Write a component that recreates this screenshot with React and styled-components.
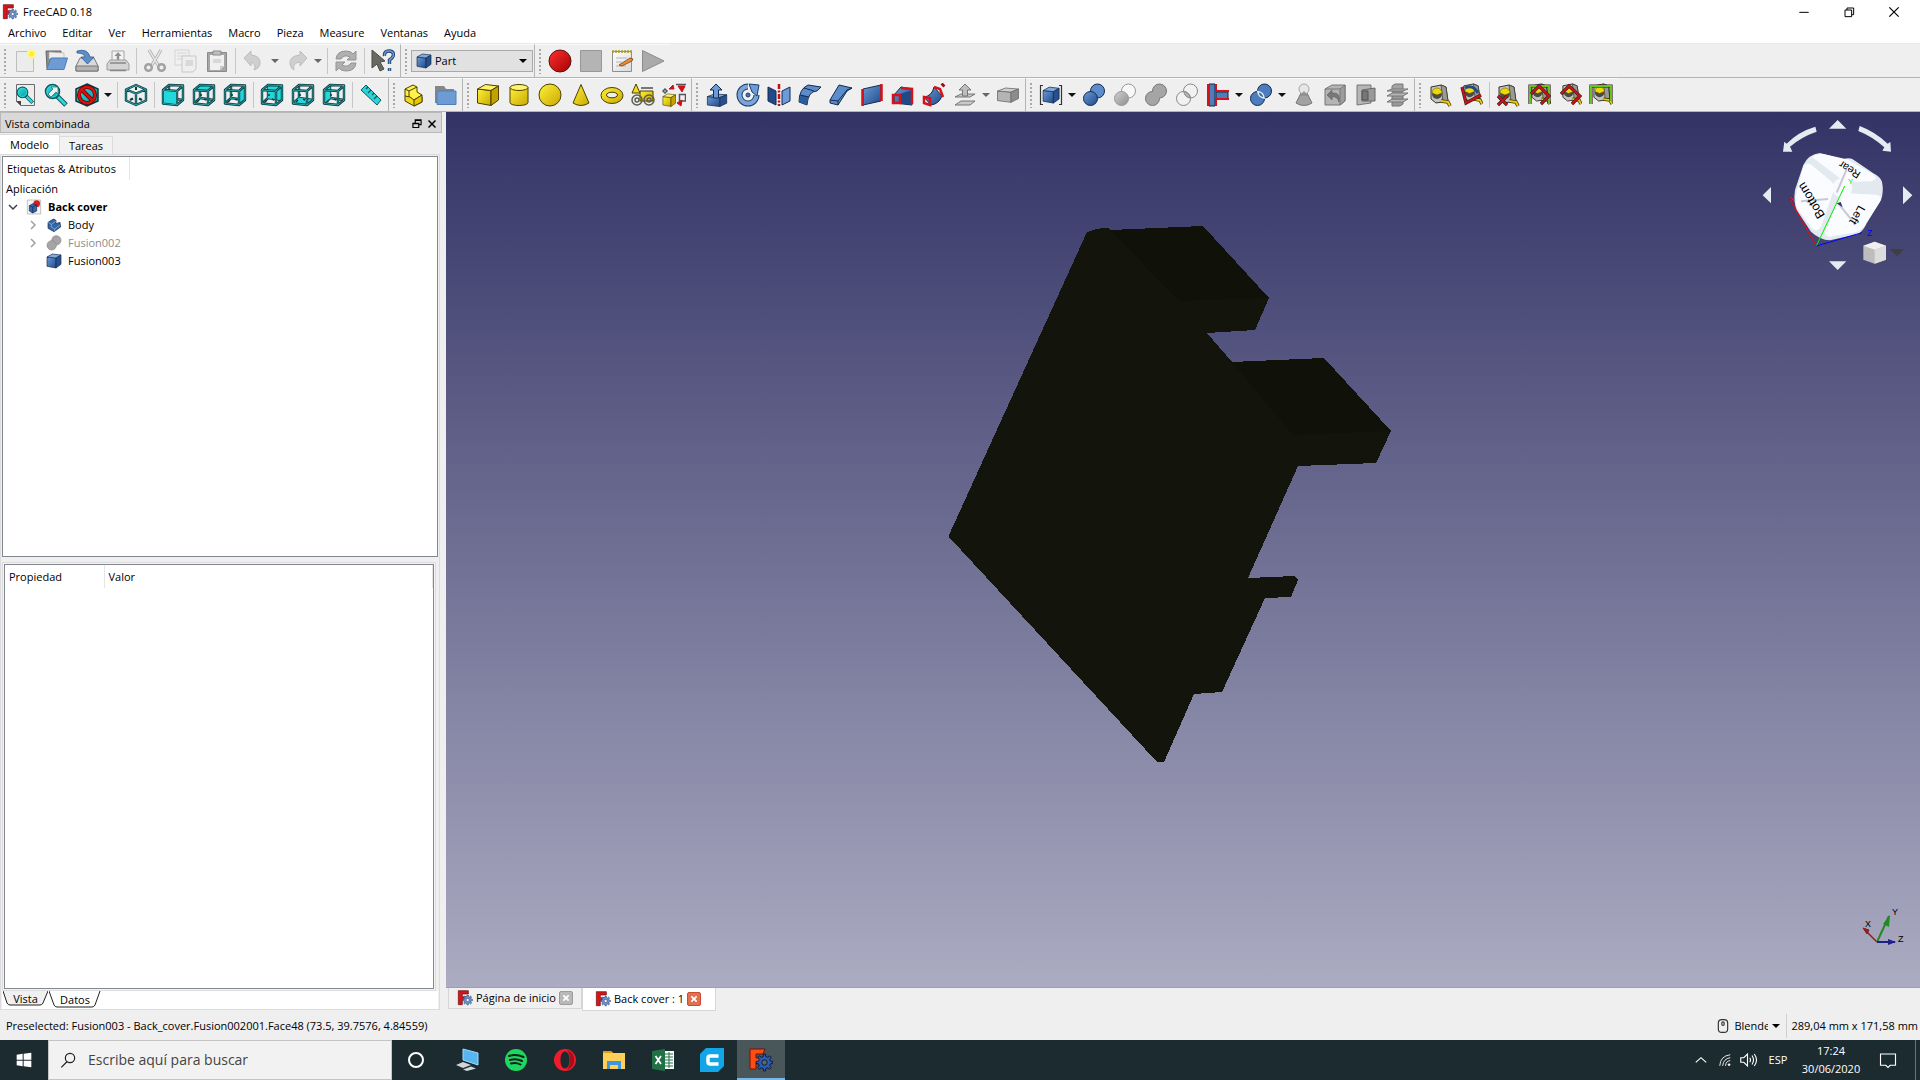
import { useState } from "react";
import styled, { createGlobalStyle } from "styled-components";

const GlobalStyle = createGlobalStyle`
  * {
    box-sizing: border-box;
  }

  body {
    margin: 0;
    background: #efefef;
    color: #000000;
    font-family: "Open Sans", "Noto Sans", sans-serif;
    font-size: 11px;
    line-height: 16px;
  }

  button,
  input,
  select {
    margin: 0;
    padding: 0;
    border: none;
    background: none;
    color: inherit;
    font: inherit;
  }
`;

const Window = styled.div`
  display: flex;
  flex-direction: column;
  min-height: 100vh;
`;

const Svg = styled.svg`
  display: block;
  flex: none;
  width: ${(props) => props.$size || 24}px;
  height: ${(props) => props.$size || 24}px;
`;

const HiddenSvg = styled.svg`
  position: absolute;
  width: 0;
  height: 0;
`;

const TitleBar = styled.header`
  display: flex;
  align-items: center;
  height: 23px;
  padding: 0 4px 0 2px;
  gap: 5px;
  background: #ffffff;
`;

const AppTitle = styled.h1`
  flex: 1;
  margin: 0;
  font-size: 11px;
  font-weight: 400;
`;

const WindowButtons = styled.div`
  display: flex;
`;

const WindowButton = styled.button`
  display: flex;
  justify-content: center;
  width: 45px;
`;

const MenuBar = styled.nav`
  display: flex;
  height: 21px;
  background: #ffffff;
  border-bottom: 1px solid #e8e8e8;
`;

const MenuItem = styled.button`
  padding: 0 8px;
`;

const ToolbarRow = styled.div`
  display: flex;
  height: 34px;
  background: #efefef;
  border-bottom: 1px solid #b4b4b4;
`;

const Toolbar = styled.div`
  display: flex;
  align-items: center;
  padding-right: 1px;
  border-top: 1px solid #fafafa;
  border-right: 1px solid ${(props) => (props.$open ? "transparent" : "#b4b4b4")};
`;

const Handle = styled.div`
  width: 10px;
  height: 26px;
  background: radial-gradient(circle, #a8a8a8 1px, transparent 1px) 3px 0 / 4px 4px
    repeat-y;
`;

const ToolButton = styled.button`
  display: flex;
  align-items: center;
  padding-left: 3px;
  width: ${(props) => (props.$menu ? 43 : 31)}px;
  height: 30px;
  gap: 5px;
  color: ${(props) => (props.$dim ? "#666666" : "#111111")};
`;

const Caret = styled.span`
  flex: none;
  border: solid transparent;
  border-width: 4px 4px 0;
  border-top-color: currentColor;
  pointer-events: none;
`;

const Separator = styled.div`
  width: 6px;
  height: 26px;
  background: linear-gradient(#c6c6c6, #c6c6c6) 2px 0 / 1px 100% no-repeat;
`;

const Workbench = styled.label`
  display: flex;
  align-items: center;
  width: 122px;
  height: 22px;
  padding: 0 5px 0 4px;
  gap: 3px;
  background: #e1e1e1;
  border: 1px solid #a9a9a9;
`;

const PlainSelect = styled.select`
  flex: 1;
  min-width: 0;
  appearance: none;
  outline: none;
`;

const Main = styled.main`
  display: flex;
  flex: 1;
`;

const Dock = styled.aside`
  display: flex;
  flex-direction: column;
  width: 442px;
  margin-right: 4px;
  padding-bottom: 2px;
`;

const DockTitle = styled.div`
  display: flex;
  align-items: center;
  height: 21px;
  padding: 2px 3px 0 4px;
  gap: 2px;
  background: #d9d9d9;
  border: 1px solid #b9b9b9;
`;

const DockName = styled.h2`
  flex: 1;
  margin: 0;
  font-size: 11px;
  font-weight: 400;
`;

const DockTabs = styled.div`
  display: flex;
  align-items: flex-end;
  height: 21px;
`;

const DockTab = styled.button`
  width: ${(props) => (props.$active ? 60 : 53)}px;
  height: ${(props) => (props.$active ? 20 : 18)}px;
  background: ${(props) => (props.$active ? "#ffffff" : "#f2f2f2")};
  border: 1px solid #dcdcdc;
  border-left: none;
  border-bottom: none;
`;

const Pane = styled.div`
  display: flex;
  flex: 1;
  flex-direction: column;
  width: 440px;
  padding: 1px 1px 0;
  border: 1px solid #dcdcdc;
`;

const TreeBox = styled.div`
  width: 436px;
  height: 401px;
  border: 1px solid #828790;
  background: #ffffff;
`;

const TreeHeader = styled.div`
  width: 127px;
  height: 23px;
  padding: 4px;
  border-right: 1px solid #e5e5e5;
`;

const Tree = styled.ul`
  margin: 0;
  padding: 0;
  list-style: none;
`;

const TreeRow = styled.li`
  display: flex;
  align-items: center;
  height: 18px;
  padding-left: ${(props) => props.$level * 20}px;
  color: ${(props) => (props.$hidden ? "#8c8c8c" : "#000000")};
  font-weight: ${(props) => (props.$bold ? 700 : 400)};
`;

const TreeToggle = styled.button`
  display: flex;
  justify-content: center;
  width: 20px;
  margin-right: 3px;
`;

const TreeLabel = styled.span`
  padding-left: 6px;
`;

const TreeRoot = styled.li`
  height: 18px;
  padding: 1px 3px;
`;

const PropertyFrame = styled.div`
  flex: 1;
  width: 434px;
  margin-top: 5px;
  padding: 1px;
  border: 1px solid #dcdcdc;
  background: #f4f4f4;
`;

const PropertyBox = styled.div`
  height: 100%;
  border: 1px solid #828790;
  background: #ffffff;
`;

const PropertyTable = styled.table`
  width: 100%;
  border-collapse: collapse;
  table-layout: fixed;
`;

const PropertyHead = styled.th`
  width: ${(props) => (props.$narrow ? "99px" : "auto")};
  height: 23px;
  padding: 0 4px;
  border-right: 1px solid #e5e5e5;
  font-weight: 400;
  text-align: left;
`;

const PaneTabs = styled.div`
  display: flex;
  height: 18px;
  padding-left: 1px;
  gap: 1px;
  background: #ffffff;
`;

const PaneTab = styled.button`
  position: relative;
  width: ${(props) => (props.$active ? 52 : 45)}px;
  height: ${(props) => (props.$active ? 17 : 15)}px;
  z-index: 0;
`;

const PaneTabShape = styled.svg`
  position: absolute;
  inset: 0;
  width: 100%;
  height: 100%;
  z-index: -1;
`;

const Editor = styled.section`
  display: flex;
  flex: 1;
  flex-direction: column;
  min-width: 0;
`;

const Viewport = styled.div`
  position: relative;
  flex: 1;
  background: linear-gradient(#333366, #ababc2);
  border-bottom: 1px solid #a0a0a0;
`;

const Scene = styled.svg`
  position: absolute;
  inset: 0;
  width: 100%;
  height: 100%;
`;

const NavigationCube = styled.svg`
  position: absolute;
  top: 0;
  right: 0;
  width: 180px;
  height: 168px;
  font-family: "Liberation Sans", sans-serif;
`;

const AxisCross = styled.svg`
  position: absolute;
  right: 10px;
  bottom: 32px;
  width: 48px;
  height: 48px;
  font-family: "Liberation Sans", sans-serif;
`;

const DocumentTabs = styled.div`
  display: flex;
  align-items: flex-start;
  height: 24px;
  padding-left: 2px;
`;

const DocumentTab = styled.div`
  display: flex;
  align-items: center;
  width: 134px;
  height: ${(props) => (props.$active ? 23 : 21)}px;
  padding-left: ${(props) => (props.$active ? 12 : 8)}px;
  gap: 3px;
  background: ${(props) => (props.$active ? "#ffffff" : "#f0f0f0")};
  border: 1px solid #d6d6d6;
  border-top: none;
`;

const CloseTab = styled.button`
  display: flex;
  align-items: center;
  justify-content: center;
  width: 14px;
  height: 14px;
  background: ${(props) => (props.$active ? "#e0704f" : "#b9b9b9")};
  border: 1px solid ${(props) => (props.$active ? "#cf4a32" : "#9b9b9b")};
  border-radius: 2px;
`;

const StatusBar = styled.footer`
  display: flex;
  align-items: center;
  height: 28px;
  padding-left: 6px;
`;

const StatusText = styled.span`
  flex: 1;
`;

const NavigationStyle = styled.label`
  display: flex;
  align-items: center;
  width: 64px;
  margin-right: 6px;
  gap: 4px;
`;

const Dimensions = styled.span`
  padding: 4px 2px 4px 4px;
  border-left: 1px solid #cfcfcf;
  white-space: nowrap;
`;

const Taskbar = styled.footer`
  display: flex;
  height: 40px;
  background: #1b2b30;
  color: #ffffff;
`;

const TaskButton = styled.button`
  display: flex;
  align-items: center;
  justify-content: center;
  width: 48px;
  height: 40px;
  background: ${(props) => (props.$active ? "#49575b" : "transparent")};
  border-bottom: 2px solid ${(props) => (props.$active ? "#76b9ed" : "transparent")};
  border-top: 2px solid transparent;
`;

const TaskList = styled.div`
  display: flex;
  flex: 1;
  margin-left: 3px;
  gap: 1px;
`;

const SearchBox = styled.label`
  display: flex;
  align-items: center;
  width: 344px;
  padding-left: 11px;
  gap: 12px;
  background: #f2f2f2;
  border: 1px solid #c4c4c4;
  color: #333333;
`;

const SearchInput = styled.input`
  flex: 1;
  min-width: 0;
  outline: none;
  font-size: 14px;

  &::placeholder {
    color: #444444;
    opacity: 1;
  }
`;

const Tray = styled.div`
  display: flex;
  align-items: center;
  margin-right: 4px;
  border-right: 1px solid #66757a;
`;

const TrayButton = styled.button`
  display: flex;
  justify-content: center;
  width: 24px;
`;

const LanguageButton = styled.button`
  width: 34px;
`;

const Clock = styled.time`
  width: 60px;
  margin-left: 6px;
  line-height: 18px;
  text-align: center;
`;

const NoticeButton = styled(TrayButton)`
  width: 54px;
`;

const blue = { top: "#82abdd", front: "url(#blueFill)", side: "#264f8c", line: "#132b4e" };
const yellow = { top: "#fff36a", front: "url(#yellowFill)", side: "#c4a000", line: "#4a4000" };
const grey = { top: "#cfcfcf", front: "#b4b4b4", side: "#8c8c8c", line: "#6c6c6c" };

function Gradients() {
  const fills = [
    ["yellowFill", "#fff03a", "#c9a800"],
    ["blueFill", "#6b9bd8", "#204a87"],
    ["cyanFill", "#34e0e2", "#06989a"],
    ["greyFill", "#d0d0d0", "#8e8e8e"],
    ["paperFill", "#ffffff", "#d8d8d8"],
    ["redFill", "#ff3030", "#a40000"],
  ];
  return (
    <HiddenSvg aria-hidden="true">
      <defs>
        {fills.map(([id, from, to]) => (
          <linearGradient key={id} id={id} x1="0" y1="0" x2="1" y2="1">
            <stop offset="0" stopColor={from} />
            <stop offset="1" stopColor={to} />
          </linearGradient>
        ))}
      </defs>
    </HiddenSvg>
  );
}

function Block({ tone }) {
  return (
    <g stroke={tone.line} strokeLinejoin="round">
      <path d="M1.500 6 15 7.500V22.500L1.500 20Z" fill={tone.front} />
      <path d="M1.500 6 9.500 1.500 22.500 3 15 7.500Z" fill={tone.top} />
      <path d="M15 7.500 22.500 3V17L15 22.500Z" fill={tone.side} />
    </g>
  );
}

function Wire({ d }) {
  return (
    <>
      <path d={d} fill="none" stroke="#08393d" strokeWidth="2.400" strokeLinejoin="round" />
      <path d={d} fill="none" stroke="#3bb9bd" strokeWidth="0.800" strokeLinejoin="round" />
    </>
  );
}

const cubeFaces = {
  front: "M2 7 16 8V22L2 20.500Z",
  top: "M2 7 8 2 22 2.500 16 8Z",
  right: "M16 8 22 2.500V17L16 22Z",
  rear: "M8 2 22 2.500V17L8 15Z",
  bottom: "M2 20.500 8 15 22 17 16 22Z",
  left: "M2 7 8 2V15L2 20.500Z",
};

function WireCube({ face }) {
  return (
    <>
      <Wire d="M8 2V15L2 20.500M8 15 22 17" />
      <path d={cubeFaces[face]} fill="#22d8dc" />
      {face !== "front" && (
        <path d="M9 11V13M7 17 5 19M12 16 14 17" stroke="#08393d" strokeWidth="1.500" />
      )}
      <Wire d="M2 7 16 8V22L2 20.500ZM2 7 8 2 22 2.500V17L16 22M16 8 22 2.500" />
      {face === "front" && <path d="M3 8 15 9V21L3 19.500Z" fill="#22d8dc" />}
    </>
  );
}

function Lens({ arrow, small }) {
  return (
    <g transform={small ? "translate(3 3) scale(.76)" : undefined}>
      <path d="M13 13 22 22" stroke="#0b5b5f" strokeWidth="5" />
      <path d="M14 14 21.500 21.500" stroke="#34d4d8" strokeWidth="3" />
      <circle cx="8.500" cy="8.500" r="7" fill="url(#cyanFill)" stroke="#0b5b5f" strokeWidth="1.500" />
      <circle cx="8.500" cy="8.500" r="5.500" fill="none" stroke="#34e0e2" />
      {arrow && <path d="M4 11 9 6 7 4H14V11L12 9 7 14Z" fill="#e8f4f4" stroke="#305a5c" strokeWidth=".7" />}
    </g>
  );
}

function TwoSpheres({ a, b, line, overlap }) {
  return (
    <>
      <circle cx="15.500" cy="8" r="7" fill={b} stroke={line} />
      <circle cx="8.500" cy="15.500" r="7" fill={a} stroke={line} />
      {overlap && (
        <path d="M8.800 8.500A7 7 0 0 0 15.200 15 7 7 0 0 0 8.800 8.500Z" fill={overlap} stroke={line} />
      )}
    </>
  );
}

function Tape({ children, small }) {
  return (
    <>
      <g transform={small ? "translate(3 0) scale(.95)" : "translate(1 1)"}>
        <path d="M2 3 12 1 17 3 19 17 7 19 2 15Z" fill="#c4c4bc" stroke="#33332f" />
        <path d="M12 1 17 3 19 17 14 18Z" fill="#9a9a90" stroke="#33332f" strokeWidth=".7" />
        <circle cx="8" cy="10" r="5" fill="#4a4a4a" />
        <path d="M3 9A5 5 0 0 1 13 9L8 11Z" fill="#f0d800" stroke="#5a4c00" strokeWidth=".5" />
        <path d="M12 17 19 18 21 22" fill="none" stroke="#3a3100" strokeWidth="3.500" />
        <path d="M12 17 19 18 21 22" fill="none" stroke="#e8cb18" strokeWidth="2" />
      </g>
      {children}
    </>
  );
}

function Outline({ d, color = "#d01018" }) {
  return (
    <>
      <path d={d} fill="none" stroke="#332020" strokeWidth="3.200" />
      <path d={d} fill="none" stroke={color} strokeWidth="2" />
    </>
  );
}

function Gear({ x, y, r, fill, line, hole }) {
  const teeth = 8;
  const points = [];
  for (let i = 0; i < teeth; i++) {
    [
      [-0.28, 0.72],
      [-0.16, 1],
      [0.16, 1],
      [0.28, 0.72],
    ].forEach(([offset, reach]) => {
      const angle = ((i + offset) / teeth) * Math.PI * 2;
      points.push(`${(x + Math.cos(angle) * r * reach).toFixed(1)},${(y + Math.sin(angle) * r * reach).toFixed(1)}`);
    });
  }
  return (
    <>
      <polygon points={points.join(" ")} fill={fill} stroke={line} strokeLinejoin="round" />
      <circle cx={x} cy={y} r={r * 0.32} fill={hole} stroke={line} />
    </>
  );
}

const icons = {
  app: (
    <>
      <path d="M2 1H17V6H8V10H14V15H8V22H2Z" fill="#d2161c" stroke="#6d0808" />
      <Gear x={16} y={15} r={7.5} fill="#6f94c6" line="#33568a" hole="#ffffff" />
    </>
  ),
  appBright: (
    <>
      <path d="M1 1H16L14 6H7V10H12V15H7V21H1Z" fill="#ff4b14" stroke="#701400" />
      <Gear x={15.5} y={14.5} r={8.5} fill="#2e5cae" line="#0b1c40" hole="#5a676c" />
    </>
  ),
  newFile: (
    <>
      <path d="M3.500 2.500H20.500V22.500H3.500Z" fill="#ececec" stroke="#bdbdbd" />
      <circle cx="18.500" cy="5" r="5" fill="#fbf59a" />
      <circle cx="18.500" cy="5" r="2.500" fill="#ffee20" />
    </>
  ),
  open: (
    <>
      <path d="M2 2H17V19H3Z" fill="#8c8c8c" stroke="#666666" />
      <path d="M5 3 20 4V10H5Z" fill="#eeeeee" stroke="#aaaaaa" strokeWidth=".6" />
      <path d="M7 9H23.500L20 20.500H2.500Z" fill="#6d9cd4" stroke="#4f7db5" />
    </>
  ),
  save: (
    <>
      <path d="M5 9H19L23 17V22H1V17Z" fill="#d9d9d9" stroke="#777777" />
      <path d="M1 17H23V22H1Z" fill="#b4b4b4" stroke="#777777" />
      <path d="M2 2Q13-1 15 8H19L12.500 15 6 8H10Q9 4 2 4Z" fill="#5f8dc6" stroke="#2f5c96" strokeWidth=".8" />
    </>
  ),
  print: (
    <>
      <path d="M6 2H18V13H6Z" fill="#f3f3f3" stroke="#a6a6a6" />
      <path d="M12 3 15.500 7H13.200V11H10.800V7H8.500Z" fill="#8f8f8f" />
      <path d="M4 11H20L23 15V21H1V15Z" fill="#d4d4d4" stroke="#9c9c9c" />
      <path d="M4 14H20M4 21.500H20" stroke="#888888" strokeWidth="1.500" />
    </>
  ),
  cut: (
    <>
      <path d="M6 1 15 16M18 1 9 16" stroke="#a8a8a8" strokeWidth="3" />
      <path d="M6 1 15 16M18 1 9 16" stroke="#e5e5e5" strokeWidth="1.500" />
      <circle cx="5.500" cy="18.500" r="3.300" fill="none" stroke="#a2a2a2" strokeWidth="2.500" />
      <circle cx="18.500" cy="18.500" r="3.300" fill="none" stroke="#a2a2a2" strokeWidth="2.500" />
    </>
  ),
  copy: (
    <>
      <path d="M1 1H15V16H1ZM3 4H13M3 7H13M3 10H8" fill="#f0f0f0" stroke="#d4d4d4" />
      <path d="M8 7H22V20L19 23H8Z" fill="#eeeeee" stroke="#c8c8c8" />
      <path d="M12 11H19V17H11Z" fill="#d9d9d9" />
    </>
  ),
  paste: (
    <>
      <path d="M2.500 3.500H21.500V22.500H2.500Z" fill="#a6a6a6" stroke="#8a8a8a" />
      <path d="M5 6H19V17L15 21H5Z" fill="#f0f0f0" />
      <path d="M8 2H16V6H8Z" fill="#c0c0c0" stroke="#8a8a8a" />
      <path d="M8 10H16V14H8Z" fill="#d8d8d8" />
      <path d="M15 21V17H19Z" fill="#c8c8c8" />
    </>
  ),
  undo: <path d="M2 9 9 2V6Q19 7 18 15 17 20 12 21 15 16 9 13V17Z" fill="#cfcfcf" stroke="#bcbcbc" />,
  redo: <path d="M22 9 15 2V6Q4 7 5 15 6 20 9 21 7 14 15 13V17Z" fill="#cfcfcf" stroke="#bcbcbc" />,
  refresh: (
    <g fill="#b0b0b0" stroke="#939393" strokeLinejoin="round">
      <path d="M2 10Q3 2 12 2 17 2 19 5L22 2V11H13L16 8Q10 5 7 10Z" />
      <path d="M22 14Q21 22 12 22 7 22 5 19L2 22V13H11L8 16Q14 19 17 14Z" />
    </g>
  ),
  whatsThis: (
    <>
      <path d="M1 1 14 12 9 13 13 20 9 22 6 15 1 19Z" fill="#6a6a62" stroke="#4a4a44" />
      <path d="M13.500 7Q13 2 18 2 22.500 2 22.500 6 22 9 18.500 11V15M18.500 19V22" fill="none" stroke="#1f3f70" strokeWidth="3.400" />
      <path d="M13.500 7Q13 2 18 2 22.500 2 22.500 6 22 9 18.500 11V15M18.500 19V22" fill="none" stroke="#6f9bd3" strokeWidth="1.500" />
    </>
  ),
  record: <circle cx="12" cy="12" r="11" fill="url(#redFill)" stroke="#5a1010" />,
  stop: <path d="M1.500 1.500H22.500V22.500H1.500Z" fill="#b4b4b4" stroke="#979797" />,
  macros: (
    <>
      <path d="M2.500 2.500H21.500V22.500H2.500Z" fill="url(#paperFill)" stroke="#8f8f8f" />
      <path d="M3 1V4M6 1V4M9 1V4M12 1V4M15 1V4M18 1V4M21 1V4" stroke="#a99a2a" strokeWidth="1.500" />
      <path d="M6 9H17M6 13H12M6 17H16" stroke="#b5b5b5" />
      <path d="M9 16 20 9 23 10 22 12 12 17Z" fill="#f08a32" stroke="#70431c" strokeWidth=".8" />
    </>
  ),
  play: <path d="M1.500 1.500 23 12 1.500 22.500Z" fill="#aaaaaa" stroke="#8c8c8c" />,
  fitAll: (
    <>
      <path d="M3.500 1.500H21.500V22.500H8L3.500 18Z" fill="#ededed" stroke="#6c6c6c" />
      <path d="M3 18H8V23Z" fill="#444444" />
      <Lens small />
    </>
  ),
  fitSelection: <Lens arrow />,
  drawStyle: (
    <>
      <path d="M12 1 23 6V18L12 23 1 18V6Z" fill="url(#cyanFill)" stroke="#08393d" strokeWidth="1.500" />
      <circle cx="12" cy="12" r="8" fill="none" stroke="#600000" strokeWidth="4" />
      <path d="M6.500 6.500 17.500 17.500" stroke="#600000" strokeWidth="4" />
      <circle cx="12" cy="12" r="8" fill="none" stroke="#d81010" strokeWidth="2.500" />
      <path d="M6.500 6.500 17.500 17.500" stroke="#d81010" strokeWidth="2.500" />
    </>
  ),
  isometric: (
    <>
      <Wire d="M12 2 22 6.500V17.500L12 22 2 17.500V6.500ZM2 6.500 12 10.500 22 6.500M12 10.500V22" />
      <path d="M12 4V7M6 17 9 15.500M18 17 15 15.500" stroke="#08393d" strokeWidth="2" />
    </>
  ),
  front: <WireCube face="front" />,
  top: <WireCube face="top" />,
  right: <WireCube face="right" />,
  rear: <WireCube face="rear" />,
  bottom: <WireCube face="bottom" />,
  left: <WireCube face="left" />,
  ruler: (
    <>
      <path d="M2 7 7 2 22 17 18 22Z" fill="#2ad4d8" stroke="#0b5b5f" />
      <path d="M9 4 7 6M12 7 9 10M15 10 13 12M18 13 15 16" stroke="#0b5b5f" strokeWidth="1.300" />
    </>
  ),
  part: (
    <g stroke="#4a4000" strokeLinejoin="round">
      <path d="M3 13 11 9 20 14V19L12 23 3 18Z" fill="#f2d91c" />
      <path d="M3 13V6L11 2 15 4V9L20 12 12 17 8 14Z" fill="#fff04a" />
      <path d="M12 17V23L20 19V12Z" fill="#e5c800" />
      <path d="M3 6 7 8 15 4M7 8V14" fill="none" />
    </g>
  ),
  group: (
    <>
      <path d="M2 3H11L13 6H21V20H2Z" fill="#868686" />
      <path d="M4 8H23V21.500H4Z" fill="#6c9cd3" stroke="#4f80ba" />
    </>
  ),
  cube: <Block tone={yellow} />,
  cylinder: (
    <g stroke="#4a4000">
      <path d="M3 4.500V19.500C3 23.500 21 23.500 21 19.500V4.500Z" fill="url(#yellowFill)" />
      <ellipse cx="12" cy="4.500" rx="9" ry="3" fill="#fff36a" />
    </g>
  ),
  sphere: <circle cx="12" cy="12" r="11" fill="url(#yellowFill)" stroke="#4a4000" />,
  cone: <path d="M12 1.500 20 20Q12 25 4 20Z" fill="url(#yellowFill)" stroke="#4a4000" strokeLinejoin="round" />,
  torus: (
    <g stroke="#4a4000">
      <ellipse cx="12" cy="12.500" rx="11" ry="8" fill="url(#yellowFill)" />
      <ellipse cx="12" cy="12" rx="5.500" ry="2.800" fill="#efefef" />
    </g>
  ),
  primitives: (
    <>
      <path d="M9 8H22V18H9Z" fill="url(#yellowFill)" stroke="#4a4000" />
      <path d="M5 1 9 10H1Z" fill="#f2d91c" stroke="#4a4000" />
      <path d="M10 5H22" stroke="#777777" strokeWidth="2" />
      <g fill="none" stroke="#5d5d50" strokeWidth="1.500">
        <circle cx="6" cy="17" r="5" />
        <circle cx="6" cy="17" r="2" />
        <circle cx="18" cy="17" r="5" />
        <circle cx="18" cy="17" r="2" />
      </g>
    </>
  ),
  builder: (
    <>
      <g transform="translate(0 10) scale(.6)">
        <Block tone={yellow} />
      </g>
      <path d="M14 1.500H24M17.500 11.500H23.500V18H17.500ZM3 6 5 8 3 10 1 8Z" fill="none" stroke="#555555" strokeWidth="1.500" />
      <path d="M7 6 11 2 12 6ZM16 3H23L20 9ZM15 20 20 17 19 23Z" fill="#d01018" stroke="#d01018" />
    </>
  ),
  extrude: (
    <>
      <g transform="translate(1 10) scale(.92 .6)">
        <Block tone={blue} />
      </g>
      <path d="M11 1 17 7H13.500V15H8.500V7H5Z" fill="#6b9bd8" stroke="#132b4e" />
    </>
  ),
  revolve: (
    <>
      <path d="M12 3.500A8.500 8.500 0 1 0 20.500 12" fill="none" stroke="#1e3d68" strokeWidth="6" />
      <path d="M12 3.500A8.500 8.500 0 1 0 20.500 12" fill="none" stroke="#7ba4d8" strokeWidth="4" />
      <path d="M13 1 23 2 21 13 16 9Z" fill="#6b9bd8" stroke="#1e3d68" />
      <circle cx="12" cy="12" r="2" fill="#4a76b5" stroke="#1e3d68" />
    </>
  ),
  mirror: (
    <>
      <path d="M1 4 9 8V22L1 18Z" fill="#204a87" stroke="#132b4e" />
      <path d="M23 4 15 8V22L23 18Z" fill="#6b9bd8" stroke="#132b4e" />
      <path d="M12 1V23" stroke="#c01018" strokeWidth="2.500" strokeDasharray="5 1.500 2 1.500" />
    </>
  ),
  fillet: (
    <>
      <path d="M1 19Q1 6 10 2L23 4 19 8Q10 8 9 22Z" fill="#5b8ccb" stroke="#132b4e" />
      <path d="M1 19Q2 13 3 12L11 14Q9 18 9 22Z" fill="#2b5c9e" />
      <path d="M2 12 11 14M6 5 16 8" fill="none" stroke="#132b4e" />
    </>
  ),
  chamfer: (
    <>
      <path d="M1 17 10 2 23 5 18 8 9 22 1 20Z" fill="#5b8ccb" stroke="#132b4e" />
      <path d="M1 17 9 18 18 7 23 5M9 18V22" fill="none" stroke="#132b4e" />
    </>
  ),
  ruled: (
    <>
      <path d="M3 6 21 2V18L3 22Z" fill="url(#blueFill)" stroke="#132b4e" />
      <path d="M2.500 6V23M21.500 1V18" stroke="#d81018" strokeWidth="2.500" />
    </>
  ),
  loft: (
    <>
      <path d="M3 12 10 4 21 6 21 22 3 20Z" fill="url(#blueFill)" stroke="#132b4e" />
      <path d="M9 11 21 7V22L9 20Z" fill="#204a87" />
      <path d="M2 12H9V20H2ZM10 5 21 6V21" fill="none" stroke="#d81018" strokeWidth="2.500" />
    </>
  ),
  sweep: (
    <>
      <path d="M2 14Q10 13 12 4L20 13Q17 21 9 22Z" fill="url(#blueFill)" stroke="#132b4e" />
      <path d="M2 14 8 15V22L2 20ZM12 4 18 6 21 14" fill="none" stroke="#d81018" strokeWidth="2.500" />
      <path d="M20 3 22 1" stroke="#a80810" strokeWidth="4" />
    </>
  ),
  offset: (
    <>
      <path d="M2 14 8 11H22L17 14Z" fill="#c8c8c8" stroke="#777777" />
      <path d="M12 1 18 7H14.500V13H9.500V7H6Z" fill="#bdbdbd" stroke="#777777" />
      <path d="M2 22 8 18H22L17 22Z" fill="#c8c8c8" stroke="#777777" />
    </>
  ),
  thickness: (
    <g transform="translate(0 4) scale(1 .68)">
      <Block tone={grey} />
    </g>
  ),
  compound: (
    <>
      <g transform="translate(3 3) scale(.76)">
        <Block tone={blue} />
      </g>
      <path d="M4 2.500H1.500V21.500H4M20 2.500H22.500V21.500H20" fill="none" stroke="#333333" strokeWidth="1.200" />
    </>
  ),
  boolean: <TwoSpheres a="url(#blueFill)" b="#5b8ccb" line="#132b4e" />,
  cutShape: <TwoSpheres a="url(#greyFill)" b="#f8f8f8" line="#999999" />,
  fuse: (
    <>
      <TwoSpheres a="#a5a5a5" b="#a5a5a5" line="#777777" />
      <circle cx="12" cy="12" r="4.500" fill="#a5a5a5" />
    </>
  ),
  common: <TwoSpheres a="#f2f2f2" b="#f2f2f2" line="#888888" overlap="#b4b4b4" />,
  connect: (
    <>
      <path d="M3 1H9V23H3ZM10 9H22V16H10Z" fill="#4f7db8" stroke="#132b4e" />
      <path d="M2 1V23M10 1V8H23M10 23V16H23" fill="none" stroke="#d81018" strokeWidth="2" />
    </>
  ),
  split: (
    <>
      <TwoSpheres a="#4b7dbe" b="#4b7dbe" line="#132b4e" />
      <path d="M8.800 8.500A7 7 0 0 0 15.200 15 7 7 0 0 0 8.800 8.500Z" fill="#3f71b2" stroke="#e6eef8" strokeWidth="1.500" />
    </>
  ),
  checkGeometry: (
    <>
      <path d="M9 10H15L20 20Q12 25 4 20Z" fill="#a2a2a2" stroke="#777777" />
      <circle cx="12" cy="6" r="5" fill="#e6e6e6" stroke="#a6a6a6" />
      <path d="M8 13 12 8 16 13Z" fill="#909090" />
    </>
  ),
  defeaturing: (
    <>
      <path d="M2 6 9 2H22V18L17 22H2Z" fill="#b4b4b4" stroke="#777777" />
      <path d="M17 6 22 2V18L17 22ZM2 6H17" fill="#9c9c9c" stroke="#777777" />
      <path d="M4 12 9 7V10Q18 9 16 19 14 13 9 14V17Z" fill="#777777" stroke="#5f5f5f" strokeWidth=".6" />
    </>
  ),
  section: (
    <>
      <path d="M3 2H17V20L3 22Z" fill="#b6b6b6" stroke="#777777" />
      <path d="M8 7 21 5V18L8 18Z" fill="#999999" stroke="#666666" />
      <path d="M8 8H14V17H8Z" fill="#777777" stroke="#555555" />
    </>
  ),
  crossSections: (
    <g stroke="#777777" fill="#b7b7b7">
      <path d="M7 16H18V21L15 23H7Z" fill="#999999" />
      <path d="M2 19 7 16H23L18 19Z" />
      <path d="M7 10H18V16H7Z" fill="#999999" />
      <path d="M2 13 7 10H23L18 13Z" />
      <path d="M7 3 10 1H18V9H7Z" fill="#a2a2a2" />
      <path d="M2 8 7 6H23L18 8Z" />
    </g>
  ),
  measureLinear: <Tape />,
  measureAngular: (
    <Tape small>
      <Outline d="M3 4 7 20 22 12" />
      <path d="M6 5Q14 1 19 10" fill="none" stroke="#204a87" strokeWidth="3" />
    </Tape>
  ),
  measureClear: (
    <Tape>
      <Outline d="M2 13 11 22M11 13 2 22" />
    </Tape>
  ),
  measureToggleAll: (
    <Tape small>
      <Outline d="M3 21V3H22V21" color="#66c41c" />
      <Outline d="M4 11 12 3 22 13 14 21" />
    </Tape>
  ),
  measureToggle3d: (
    <Tape small>
      <Outline d="M3 11 11 3 22 13 14 21" />
    </Tape>
  ),
  measureToggleDelta: (
    <Tape small>
      <Outline d="M2 21V3H22V18" color="#66c41c" />
    </Tape>
  ),
  document: (
    <>
      <path d="M2 1.500H22V22.500H2Z" fill="#f4f4f4" stroke="#a8a8a8" />
      <circle cx="16" cy="7" r="5" fill="#e01818" />
      <path d="M5 10 10 7 16 9V18L10 21 5 18Z" fill="#3465a4" stroke="#132b4e" />
      <path d="M5 10 10 12 16 9M10 12V21" fill="none" stroke="#132b4e" />
    </>
  ),
  body: (
    <g stroke="#132b4e" strokeLinejoin="round">
      <path d="M3 8 11 3 15 5V10L21 8 22 15 12 22 3 17Z" fill="#3465a4" />
      <path d="M3 8 8 11 15 6M8 11V15L13 18 21 12M13 18V21" fill="none" stroke="#9dbce4" />
    </g>
  ),
  fusion: <TwoSpheres a="#a5a5a5" b="#a5a5a5" line="#8a8a8a" />,
  solid: <Block tone={blue} />,
  mouse: (
    <g fill="none" stroke="#333333" strokeWidth="2">
      <rect x="4" y="1" width="16" height="22" rx="6" />
      <rect x="10" y="5" width="4" height="6" rx="2" />
    </g>
  ),
  windows: <path d="M1 4 10 2.700V11.500H1ZM11.500 2.500 23 1V11.500H11.500ZM1 13H10V21.500L1 20ZM11.500 13H23V23L11.500 21.500Z" fill="#ffffff" />,
  search: <path d="M10 15 2 23M22 9A7 7 0 1 1 8 9 7 7 0 0 1 22 9Z" fill="none" stroke="#222222" strokeWidth="1.800" />,
  cortana: <circle cx="12" cy="12" r="7" fill="none" stroke="#ffffff" strokeWidth="2" />,
  computer: (
    <>
      <path d="M8 1 23 5V17L8 12Z" fill="#58b6ee" stroke="#9fdaff" />
      <path d="M1 17 8 14 16 17 8 20ZM8 21.500 16 18.500 21 20.500 12 23Z" fill="#cfd6da" />
    </>
  ),
  spotify: (
    <>
      <circle cx="12" cy="12" r="11" fill="#1ed760" />
      <path d="M5 8Q12 5.500 19.500 9M6 12Q12 10 18 13M7 15.500Q12 14 16.500 16.500" fill="none" stroke="#12221a" strokeWidth="2" strokeLinecap="round" />
    </>
  ),
  opera: (
    <>
      <path fillRule="evenodd" d="M12 1A11 11 0 1 1 12 23 11 11 0 1 1 12 1ZM12 3.500C8.500 4 7.500 8 7.500 12S8.500 20 12 20.500C15.500 20 16.500 16 16.500 12S15.500 4 12 3.500Z" fill="#f01c2b" />
      <path d="M14 2A10.500 10.500 0 0 1 14 22Q17 18 17 12T14 2Z" fill="#a60f1a" />
    </>
  ),
  explorer: (
    <>
      <path d="M1 3H9L11 5H23V21H1Z" fill="#ffcf57" />
      <path d="M1 3H9L11 5H1Z" fill="#e29a10" />
      <path d="M5 13H19V21H16V17H8V21H5Z" fill="#3a97e0" />
    </>
  ),
  excel: (
    <>
      <path d="M13 3H23V21H13Z" fill="#ffffff" />
      <path d="M14 6H22M14 9H22M14 12H22M14 15H22M14 18H22M18 4V20" stroke="#207245" />
      <path d="M1 3 14 1V23L1 21Z" fill="#207245" />
      <path d="M4.500 8 10 16M10 8 4.500 16" stroke="#ffffff" strokeWidth="1.800" />
    </>
  ),
  cura: (
    <>
      <path d="M6 0H24V18L18 24H0V6Z" fill="#12a5e8" />
      <path d="M18.500 8H10Q8 8 8 10V14Q8 16 10 16H18.500" fill="none" stroke="#ffffff" strokeWidth="3.500" />
    </>
  ),
  chevronUp: <path d="M3 16 12 8 21 16" fill="none" stroke="#ffffff" strokeWidth="2" />,
  wifi: (
    <g fill="none" stroke="#ffffff" strokeWidth="1.500">
      <path d="M3 22Q4 5 21 3M8 22Q9 10 21 8M13 22Q13 14 21 13" />
      <circle cx="19" cy="20" r="1.500" fill="#ffffff" />
    </g>
  ),
  volume: (
    <path d="M1 9H5L10 4V20L5 15H1ZM13 9Q15 12 13 15M16 6Q20 12 16 18M19 4Q25 12 19 20" fill="none" stroke="#ffffff" strokeWidth="1.500" />
  ),
  notice: <path d="M2 4H22V19H15L12 22 9 19H2Z" fill="none" stroke="#ffffff" strokeWidth="1.500" />,
  minimize: <path d="M5 12.500H19" stroke="#000000" strokeWidth="1.500" />,
  restore: <path d="M6 9H16V19H6ZM9 9V6H19V16H16" fill="none" stroke="#000000" strokeWidth="1.500" />,
  close: <path d="M5 5 19 19M19 5 5 19" stroke="#000000" strokeWidth="1.800" />,
  float: <path d="M5 11H15V18H5ZM9 10V5H19V13H16M5 11.500H15M9 6H19" fill="none" stroke="#000000" strokeWidth="2" />,
  dockClose: <path d="M5 5 19 19M19 5 5 19" stroke="#000000" strokeWidth="3" />,
  tabClose: <path d="M4 4 20 20M20 4 4 20" stroke="#ffffff" strokeWidth="5" />,
  chevronDown: <path d="M4 8 12 16 20 8" fill="none" stroke="#404040" strokeWidth="3" />,
  chevronRight: <path d="M8 4 16 12 8 20" fill="none" stroke="#a0a0a0" strokeWidth="3" />,
};

function Icon({ name, size }) {
  return (
    <Svg $size={size} viewBox="0 0 24 24" aria-hidden="true">
      {icons[name]}
    </Svg>
  );
}

const menus = ["Archivo", "Editar", "Ver", "Herramientas", "Macro", "Pieza", "Measure", "Ventanas", "Ayuda"];

// "|" is a separator, a trailing "+" adds a drop-down arrow, "-" a dimmed one
const fileTools = ["newFile", "open", "save", "print", "|", "cut", "copy", "paste", "|", "undo-", "redo-", "|", "refresh", "|", "whatsThis"];
const macroTools = ["record", "stop", "macros", "play"];
const lowerToolbars = [
  ["fitAll", "fitSelection", "drawStyle+", "|", "isometric", "|", "front", "top", "right", "|", "rear", "bottom", "left", "|", "ruler"],
  ["part", "group"],
  ["cube", "cylinder", "sphere", "cone", "torus", "primitives", "builder"],
  ["extrude", "revolve", "mirror", "fillet", "chamfer", "ruled", "loft", "sweep", "offset-", "thickness"],
  ["compound+", "boolean", "cutShape", "fuse", "common", "connect+", "split+", "checkGeometry", "defeaturing", "section", "crossSections"],
  ["measureLinear", "measureAngular", "|", "measureClear", "measureToggleAll", "measureToggle3d", "measureToggleDelta"],
];

const treeItems = [
  { label: "Back cover", icon: "document", level: 0, toggle: "chevronDown", bold: true },
  { label: "Body", icon: "body", level: 1, toggle: "chevronRight" },
  { label: "Fusion002", icon: "fusion", level: 1, toggle: "chevronRight", hidden: true },
  { label: "Fusion003", icon: "solid", level: 1 },
];

const taskApps = ["computer", "spotify", "opera", "explorer", "excel", "cura", "appBright"];

function Tools({ items, open }) {
  return (
    <Toolbar role="toolbar" $open={open}>
      <Handle />
      {items.map((item, index) => {
        if (item === "|") return <Separator key={index} />;
        const name = item.replace(/[+-]$/, "");
        const menu = name !== item;
        return (
          <ToolButton key={index} aria-label={name} $menu={menu} $dim={item.endsWith("-")}>
            <Icon name={name} />
            {menu && <Caret />}
          </ToolButton>
        );
      })}
    </Toolbar>
  );
}

function CombinedView() {
  return (
    <Dock>
      <DockTitle>
        <DockName>Vista combinada</DockName>
        <button aria-label="Flotar">
          <Icon name="float" size={14} />
        </button>
        <button aria-label="Cerrar">
          <Icon name="dockClose" size={12} />
        </button>
      </DockTitle>
      <DockTabs>
        <DockTab $active>Modelo</DockTab>
        <DockTab>Tareas</DockTab>
      </DockTabs>
      <Pane>
        <TreeBox>
          <TreeHeader>Etiquetas &amp; Atributos</TreeHeader>
          <Tree>
            <TreeRoot>Aplicación</TreeRoot>
            {treeItems.map((item) => (
              <TreeRow key={item.label} $level={item.level} $bold={item.bold} $hidden={item.hidden}>
                <TreeToggle aria-label={item.label}>
                  {item.toggle && <Icon name={item.toggle} size={12} />}
                </TreeToggle>
                <Icon name={item.icon} size={16} />
                <TreeLabel>{item.label}</TreeLabel>
              </TreeRow>
            ))}
          </Tree>
        </TreeBox>
        <PropertyFrame>
          <PropertyBox>
            <PropertyTable>
              <thead>
                <tr>
                  <PropertyHead $narrow>Propiedad</PropertyHead>
                  <PropertyHead>Valor</PropertyHead>
                </tr>
              </thead>
            </PropertyTable>
          </PropertyBox>
        </PropertyFrame>
        <PaneTabs>
          <PaneTab>
            <PaneTabShape viewBox="0 0 45 15">
              <path d="M0 0 4 12Q5 14 7 14H37Q39 14 40 12L45 0" fill="#f0f0f0" stroke="#222222" />
            </PaneTabShape>
            Vista
          </PaneTab>
          <PaneTab $active>
            <PaneTabShape viewBox="0 0 52 17">
              <path d="M0 0 5 14Q6 16 8 16H43Q45 16 46 14L51 0" fill="#ffffff" stroke="#222222" />
            </PaneTabShape>
            Datos
          </PaneTab>
        </PaneTabs>
      </Pane>
    </Dock>
  );
}

function ViewCube() {
  return (
    <NavigationCube viewBox="0 6 540 504">
      <g fill="#e4ecf2">
        <path d="M293 30 319 56H267ZM293 480 319 454H267ZM68 256 93 231V280ZM517 256 489 229V283Z" />
        <path d="M129 125 133 95 140 101Q175 65 226 50L230 65Q185 80 150 110L157 125ZM453 125 451 96 443 101Q405 65 359 48L355 63Q398 80 433 112L427 122Z" />
      </g>
      <path d="M240 129Q205 133 190 165L165 240Q160 275 170 300L213 365Q240 390 270 391L355 372Q372 360 380 340L423 270Q432 245 426 215 420 200 400 190L345 152Q330 140 310 148Z" fill="#e2eaf0" />
      <path d="M190 170Q200 155 215 165L275 215Q285 225 280 245L245 345Q235 370 215 355L172 295Q162 275 170 245Z" fill="#fafcff" />
      <path d="M215 140Q235 128 260 134L320 148 395 190Q420 205 395 214L330 216Q312 215 300 205Z" fill="#fafcff" />
      <path d="M298 262Q305 250 325 250L408 254Q430 257 420 275L375 345Q365 362 340 368L268 380Q250 380 258 360Z" fill="#fafcff" />
      <ellipse cx="307" cy="234" rx="30" ry="30" fill="#f8fafd" />
      <path d="M290 248 320 178M183 274 264 267M295 280 346 344" stroke="#c9c9d6" strokeWidth="6" />
      <path d="M290 280 302 276 308 292Z" fill="#333366" />
      <g fill="#000000">
        <text fontSize="38" transform="translate(256 316) rotate(-122)">Bottom</text>
        <text fontSize="32" transform="translate(364 188) rotate(-148)">Rear</text>
        <text fontSize="35" transform="translate(356 284) rotate(120)">Left</text>
      </g>
      <g fill="none" strokeWidth="3">
        <path d="M229 408 152 272" stroke="#ff0000" />
        <path d="M229 408 314 228" stroke="#00f000" />
        <path d="M229 408 366 368" stroke="#0000ff" />
      </g>
      <text x="147" y="277" fontSize="24" fill="#ff0000">X</text>
      <text x="324" y="223" fontSize="24" fill="#00f000">Y</text>
      <text x="381" y="377" fontSize="26" fill="#0000ff">Z</text>
      <path d="M370 407 404 395 438 407V449L404 461 370 449Z" fill="#bdbdbd" />
      <path d="M370 407 404 395 438 407 404 419Z" fill="#f0f0f0" />
      <path d="M404 419 438 407V449L404 461Z" fill="#dcdcdc" />
      <path d="M449 417H492L471 439Z" fill="#3f3f42" />
    </NavigationCube>
  );
}

function View3D() {
  return (
    <Viewport>
      <Scene viewBox="0 0 1474 875" shapeRendering="crispEdges" role="img" aria-label="Back cover">
        <path
          d="M641 120 647 118 656 116H663L664 118 749 115 757 114 823 186 809 218 761 221 786 250 878 246 945 319 930 351 852 354 802 466 849 464 852 468 845 485 819 486 776 580 748 582 718 650H711L503 425V423Z"
          fill="#13140b"
        />
        <path d="M664 118 757 114 823 186 733 189ZM786 250 878 246 945 319 847 323Z" fill="#101109" />
      </Scene>
      <ViewCube />
      <AxisCross viewBox="0 0 48 48">
        <path d="M15 35 4 24" stroke="#8c2020" strokeWidth="1.500" />
        <path d="M1 21 7 23 5 27Z" fill="#8c2020" stroke="#8c2020" />
        <path d="M15 35 27 9" stroke="#208c20" strokeWidth="2" />
        <path d="M28 8 27 20 21 17Z" fill="#208c20" />
        <path d="M15 35H33" stroke="#20208c" strokeWidth="2" />
        <path d="M26 32 34 35 26 38Z" fill="#20208c" />
        <g fontSize="9" fill="#000000">
          <text x="3" y="20">X</text>
          <text x="30" y="8">Y</text>
          <text x="36" y="35">Z</text>
        </g>
      </AxisCross>
    </Viewport>
  );
}

function App() {
  const [workbench, setWorkbench] = useState("Part");
  const [query, setQuery] = useState("");

  return (
    <Window>
      <GlobalStyle />
      <Gradients />
      <TitleBar>
        <Icon name="app" size={16} />
        <AppTitle>FreeCAD 0.18</AppTitle>
        <WindowButtons>
          <WindowButton aria-label="Minimizar">
            <Icon name="minimize" size={16} />
          </WindowButton>
          <WindowButton aria-label="Restaurar">
            <Icon name="restore" size={16} />
          </WindowButton>
          <WindowButton aria-label="Cerrar">
            <Icon name="close" size={16} />
          </WindowButton>
        </WindowButtons>
      </TitleBar>
      <MenuBar>
        {menus.map((menu) => (
          <MenuItem key={menu}>{menu}</MenuItem>
        ))}
      </MenuBar>
      <ToolbarRow>
        <Tools items={fileTools} />
        <Toolbar>
          <Handle />
          <Workbench>
            <Icon name="solid" size={16} />
            <PlainSelect
              aria-label="Banco de trabajo"
              value={workbench}
              onChange={(e) => setWorkbench(e.target.value)}
            >
              <option>Part</option>
            </PlainSelect>
            <Caret />
          </Workbench>
        </Toolbar>
        <Tools items={macroTools} open />
      </ToolbarRow>
      <ToolbarRow>
        {lowerToolbars.map((items, index) => (
          <Tools key={index} items={items} open={index === lowerToolbars.length - 1} />
        ))}
      </ToolbarRow>
      <Main>
        <CombinedView />
        <Editor>
          <View3D />
          <DocumentTabs>
            <DocumentTab>
              <Icon name="app" size={16} />
              <span>Página de inicio</span>
              <CloseTab aria-label="Cerrar">
                <Icon name="tabClose" size={8} />
              </CloseTab>
            </DocumentTab>
            <DocumentTab $active>
              <Icon name="app" size={16} />
              <span>Back cover : 1</span>
              <CloseTab $active aria-label="Cerrar">
                <Icon name="tabClose" size={8} />
              </CloseTab>
            </DocumentTab>
          </DocumentTabs>
        </Editor>
      </Main>
      <StatusBar>
        <StatusText>
          Preselected: Fusion003 - Back_cover.Fusion002001.Face48 (73.5, 39.7576, 4.84559)
        </StatusText>
        <NavigationStyle>
          <Icon name="mouse" size={14} />
          <PlainSelect aria-label="Estilo de navegación" defaultValue="Blender">
            <option>Blender</option>
          </PlainSelect>
          <Caret />
        </NavigationStyle>
        <Dimensions>289,04 mm x 171,58 mm</Dimensions>
      </StatusBar>
      <Taskbar>
        <TaskButton aria-label="Inicio">
          <Icon name="windows" size={16} />
        </TaskButton>
        <SearchBox>
          <Icon name="search" size={16} />
          <SearchInput
            aria-label="Buscar"
            placeholder="Escribe aquí para buscar"
            value={query}
            onChange={(e) => setQuery(e.target.value)}
          />
        </SearchBox>
        <TaskButton aria-label="Cortana">
          <Icon name="cortana" />
        </TaskButton>
        <TaskList>
          {taskApps.map((name) => (
            <TaskButton key={name} aria-label={name} $active={name === "appBright"}>
              <Icon name={name} />
            </TaskButton>
          ))}
        </TaskList>
        <Tray>
          <TrayButton aria-label="Mostrar iconos ocultos">
            <Icon name="chevronUp" size={14} />
          </TrayButton>
          <TrayButton aria-label="Red">
            <Icon name="wifi" size={14} />
          </TrayButton>
          <TrayButton aria-label="Volumen">
            <Icon name="volume" size={18} />
          </TrayButton>
          <LanguageButton>ESP</LanguageButton>
          <Clock>
            17:24
            <br />
            30/06/2020
          </Clock>
          <NoticeButton aria-label="Notificaciones">
            <Icon name="notice" size={18} />
          </NoticeButton>
        </Tray>
      </Taskbar>
    </Window>
  );
}

export default App;
